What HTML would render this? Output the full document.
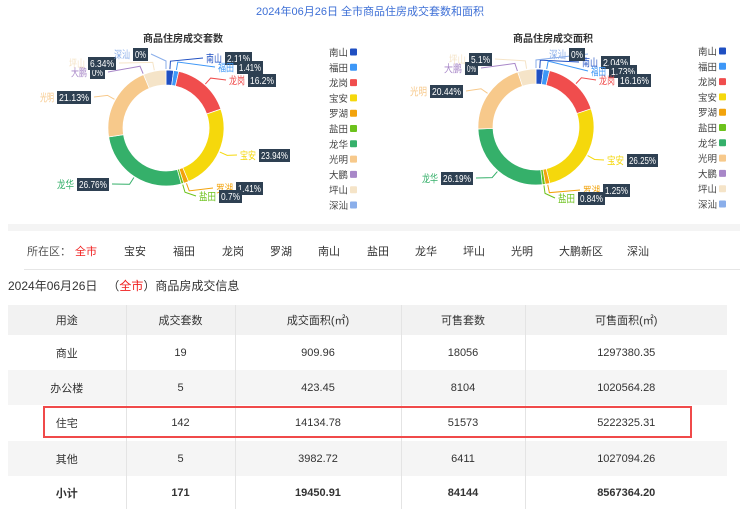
<!DOCTYPE html>
<html><head><meta charset="utf-8"><style>
*{margin:0;padding:0;box-sizing:border-box}
body{width:740px;height:507px;background:#fff;font-family:"Liberation Sans","Noto Sans CJK SC",sans-serif;position:relative;overflow:hidden;color:#333}
.a{position:absolute;white-space:nowrap}
svg{position:absolute;left:0;top:0}
table{position:absolute;left:8px;top:305px;width:719px;border-collapse:collapse;font-size:11px;color:#333}
td{text-align:center;border-left:1px solid #e4e4e4;padding:0}
td:first-child{border-left:none}
</style></head><body>
<div class="a" style="left:0;width:740px;top:3px;text-align:center;font-size:11px;color:#3d6fd6">2024年06月26日 全市商品住房成交套数和面积</div>
<svg id="s" width="740" height="222" font-family="Liberation Sans, Noto Sans CJK SC, sans-serif"></svg>
<div class="a" style="left:8px;top:224px;width:732px;height:7px;background:#f4f4f4"></div>
<div class="a" style="top:243px;font-size:11px;left:0;width:740px;height:14px">
<span class="a" style="left:27px;color:#555">所在区：</span><span class="a" style="left:75px;color:#f02020">全市</span><span class="a" style="left:124px">宝安</span><span class="a" style="left:173px">福田</span><span class="a" style="left:222px">龙岗</span><span class="a" style="left:270px">罗湖</span><span class="a" style="left:318px">南山</span><span class="a" style="left:367px">盐田</span><span class="a" style="left:415px">龙华</span><span class="a" style="left:463px">坪山</span><span class="a" style="left:511px">光明</span><span class="a" style="left:559px">大鹏新区</span><span class="a" style="left:627px">深汕</span></div>
<div class="a" style="left:24px;top:269px;width:716px;height:1px;background:#e6e6e6"></div>
<div class="a" style="left:8px;top:277px;font-size:12px;color:#333">2024年06月26日 &nbsp;&nbsp;（<span style="color:#f02020">全市</span>）商品房成交信息</div>
<table>
<tr style="background:#f2f2f2;height:30px"><td style="width:118px">用途</td><td style="width:109px">成交套数</td><td style="width:166px">成交面积(㎡)</td><td style="width:124px">可售套数</td><td>可售面积(㎡)</td></tr>
<tr style="height:35px"><td>商业</td><td>19</td><td>909.96</td><td>18056</td><td>1297380.35</td></tr>
<tr style="height:35px;background:#f5f5f5"><td>办公楼</td><td>5</td><td>423.45</td><td>8104</td><td>1020564.28</td></tr>
<tr style="height:36px"><td>住宅</td><td>142</td><td>14134.78</td><td>51573</td><td>5222325.31</td></tr>
<tr style="height:35px;background:#f5f5f5"><td>其他</td><td>5</td><td>3982.72</td><td>6411</td><td>1027094.26</td></tr>
<tr style="height:33px;font-weight:bold"><td>小计</td><td>171</td><td>19450.91</td><td>84144</td><td>8567364.20</td></tr>
</table>
<div class="a" style="left:43px;top:406px;width:649px;height:32px;border:2px solid #f04a4a"></div>
<script>
var names=["南山","福田","龙岗","宝安","罗湖","盐田","龙华","光明","大鹏","坪山","深汕"];
var cols=["#1f4fc2","#3d97f7","#f04d4d","#f5d80c","#f2a30c","#6cc21c","#35b06a","#f7c98b","#a887c8","#f5e4c8","#8aaeea"];
var charts=[
{cx:166,cy:128,title:"商品住房成交套数",tx:183,lx:329,ly:52,
 v:[2.11,1.41,16.2,23.94,1.41,0.7,26.76,21.13,0,6.34,0],
 L:[[206,58,225,252],[218,67,237,263],[229,80,248,276],[240,155,259,290],[216,188,236,263],[199,196,219,242],[57,184,77,109],[40,97,57,91],[71,72,90,105],[69,63,88,116],[114,54,133,148]]},
{cx:536,cy:127,title:"商品住房成交面积",tx:553,lx:698,ly:51,
 v:[2.04,1.73,16.16,26.25,1.25,0.84,26.19,20.44,0,5.1,0],
 L:[[582,62,601,630],[591,71,609,637],[599,80,618,651],[607,160,627,658],[583,190,603,630],[558,198,578,605],[422,178,441,473],[410,91,430,463],[444,68,465,478],[449,59,469,492],[549,54,569,585]]}];
var s="";
charts.forEach(function(c){
 s+='<text x="'+c.tx+'" y="42" text-anchor="middle" font-size="10" font-weight="bold" fill="#333">'+c.title+'</text>';
 var a=0,R=58,r=43;
 c.v.forEach(function(v,i){
  var a0=a,a1=a+v/100*360;a=a1;
  var mid=(a0+a1)/2*Math.PI/180;
  if(v>0){
   var p=function(ang,rad){ang=ang*Math.PI/180;return [c.cx+rad*Math.sin(ang),c.cy-rad*Math.cos(ang)]};
   var o0=p(a0,R),o1=p(a1,R),i1=p(a1,r),i0=p(a0,r),lg=(a1-a0)>180?1:0;
   s+='<path d="M'+o0+' A'+R+' '+R+' 0 '+lg+' 1 '+o1+' L'+i1+' A'+r+' '+r+' 0 '+lg+' 0 '+i0+'Z" fill="'+cols[i]+'" stroke="#fff" stroke-width="0.7"/>';
  }
  var L=c.L[i],x1=c.cx+(R+1)*Math.sin(mid),y1=c.cy-(R+1)*Math.cos(mid);
  var x2=c.cx+(R+9)*Math.sin(mid),y2=c.cy-(R+9)*Math.cos(mid);
  var right=i<6;
  var ax=right?L[0]-3:L[3]+3;
  s+='<polyline points="'+x1+','+y1+' '+x2+','+y2+' '+ax+','+L[1]+'" fill="none" stroke="'+cols[i]+'" stroke-width="1"/>';
  s+='<text x="'+L[0]+'" y="'+(L[1]+4)+'" font-size="10.5" fill="'+cols[i]+'" textLength="'+(L[2]-L[0]-3)+'" lengthAdjust="spacingAndGlyphs">'+names[i]+'</text>';
  s+='<rect x="'+L[2]+'" y="'+(L[1]-6)+'" width="'+(L[3]-L[2])+'" height="13" fill="#2e4052"/>';
  s+='<text x="'+(L[2]+2)+'" y="'+(L[1]+4)+'" font-size="10.5" fill="#fff" textLength="'+(L[3]-L[2]-4)+'" lengthAdjust="spacingAndGlyphs">'+v+'%</text>';
  var ly=c.ly+i*15.3;
  s+='<text x="'+c.lx+'" y="'+(ly+4)+'" font-size="9.5" fill="#444">'+names[i]+'</text>';
  s+='<rect x="'+(c.lx+21)+'" y="'+(ly-3.5)+'" width="7" height="7" rx="1" fill="'+cols[i]+'"/>';
 });
});
document.getElementById("s").innerHTML=s;
</script>
</body></html>
